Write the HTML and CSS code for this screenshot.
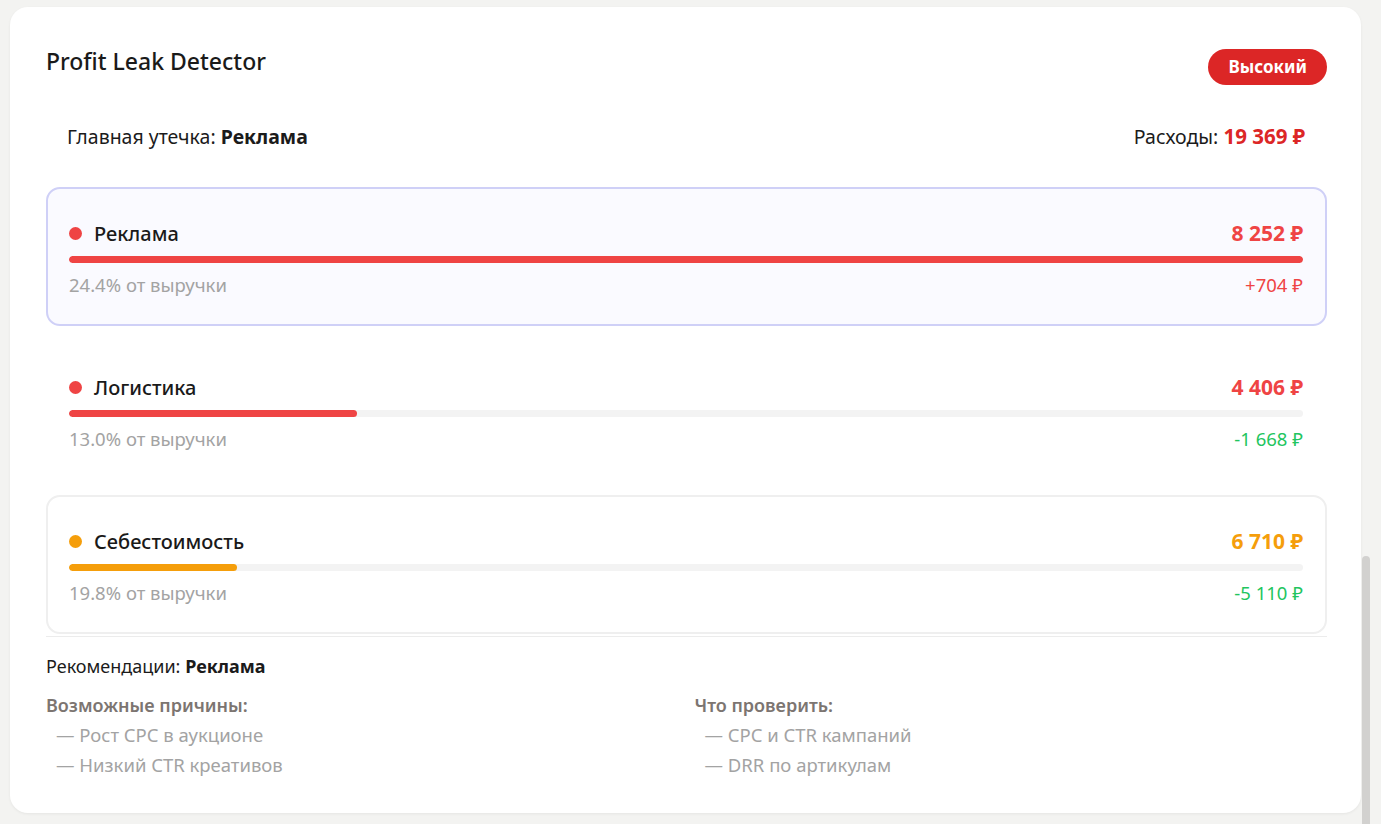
FILE: index.html
```html
<!DOCTYPE html>
<html lang="ru">
<head>
<meta charset="utf-8">
<title>Profit Leak Detector</title>
<link rel="stylesheet" href="styles.css">
</head>
<body>
<div class="page">
  <section class="panel">
    <header class="panel-head">
      <h1 class="panel-title">Profit Leak Detector</h1>
      <span class="badge">Высокий</span>
    </header>

    <div class="summary">
      <div>Главная утечка: <b>Реклама</b></div>
      <div>Расходы: <b class="total">19 369 ₽</b></div>
    </div>

    <div class="leaks">
      <div class="leak leak-active">
        <div class="leak-row">
          <span class="leak-name"><i class="dot dot-red"></i>Реклама</span>
          <span class="leak-value red">8 252 ₽</span>
        </div>
        <div class="bar"><div class="bar-fill fill-red" style="width:100%"></div></div>
        <div class="leak-row sub">
          <span>24.4% от выручки</span>
          <span class="delta red">+704 ₽</span>
        </div>
      </div>

      <div class="leak">
        <div class="leak-row">
          <span class="leak-name"><i class="dot dot-red"></i>Логистика</span>
          <span class="leak-value red">4 406 ₽</span>
        </div>
        <div class="bar"><div class="bar-fill fill-red" style="width:23.3%"></div></div>
        <div class="leak-row sub">
          <span>13.0% от выручки</span>
          <span class="delta green">-1 668 ₽</span>
        </div>
      </div>

      <div class="leak leak-outlined">
        <div class="leak-row">
          <span class="leak-name"><i class="dot dot-orange"></i>Себестоимость</span>
          <span class="leak-value orange">6 710 ₽</span>
        </div>
        <div class="bar"><div class="bar-fill fill-orange" style="width:13.6%"></div></div>
        <div class="leak-row sub">
          <span>19.8% от выручки</span>
          <span class="delta green">-5 110 ₽</span>
        </div>
      </div>
    </div>

    <div class="recs">
      <div class="recs-title">Рекомендации: <b>Реклама</b></div>
      <div class="recs-cols">
        <div class="recs-col">
          <div class="recs-head">Возможные причины:</div>
          <ul class="recs-list">
            <li>— Рост CPC в аукционе</li>
            <li>— Низкий CTR креативов</li>
          </ul>
        </div>
        <div class="recs-col">
          <div class="recs-head">Что проверить:</div>
          <ul class="recs-list">
            <li>— CPC и CTR кампаний</li>
            <li>— DRR по артикулам</li>
          </ul>
        </div>
      </div>
    </div>
  </section>
  <div class="scroll-thumb"></div>
</div>
</body>
</html>
```

FILE: styles.css
```css
* { box-sizing: border-box; }

html, body {
  margin: 0;
  height: 100%;
}

body {
  background: #f3f3f1;
  font-family: "Noto Sans", "Open Sans", sans-serif;
  color: #1b1b1b;
  overflow: hidden;
}

.page {
  position: relative;
  padding: 7px 20px 0 10px;
  height: 824px;
}

.panel {
  background: #ffffff;
  border-radius: 18px;
  box-shadow: 0 1px 3px rgba(0, 0, 0, 0.06);
  padding: 36px 34px 32px 36px;
  height: 806px;
}

.panel-head {
  display: flex;
  justify-content: space-between;
  align-items: flex-start;
}

.panel-title {
  margin: 0;
  font-size: 23px;
  font-weight: 500;
  line-height: 36px;
  color: #1a1a1a;
}

.badge {
  margin-top: 6px;
  height: 36px;
  padding: 0 20px 0 21px;
  border-radius: 18px;
  background: #dc2626;
  color: #fff;
  font-weight: 700;
  font-size: 17px;
  line-height: 36px;
}

.summary {
  display: flex;
  justify-content: space-between;
  align-items: center;
  height: 28px;
  margin: 38px 0 36px;
  padding: 0 22px 0 21px;
  font-size: 19.5px;
  line-height: 28px;
}

.summary b { font-weight: 700; }
.summary .total { color: #dc2626; font-size: 20.5px; line-height: 1; }

.leaks {
  display: flex;
  flex-direction: column;
  gap: 15px;
}

.leak {
  height: 139px;
  border: 2px solid transparent;
  border-radius: 14px;
  padding: 30px 22px 0 21px;
}

.leak-active {
  border-color: #cfd0f7;
  background: #fafaff;
}

.leak-outlined {
  border-color: #efefef;
}

.leak-row {
  display: flex;
  justify-content: space-between;
  align-items: center;
  height: 28px;
}

.leak-name {
  display: flex;
  align-items: center;
  gap: 12px;
  font-size: 20px;
  font-weight: 500;
  color: #1a1a1a;
}

.dot {
  display: block;
  width: 13px;
  height: 13px;
  border-radius: 50%;
}

.dot-red { background: #ef4444; }
.dot-orange { background: #f59e0b; }

.leak-value {
  font-size: 21px;
  font-weight: 700;
}

.red { color: #ef4444; }
.orange { color: #f59e0b; }
.green { color: #22c55e; }

.bar {
  margin-top: 9px;
  height: 7px;
  border-radius: 4px;
  background: #f3f3f3;
  overflow: hidden;
}

.bar-fill {
  height: 100%;
  border-radius: 4px;
}

.fill-red { background: #ef4444; }
.fill-orange { background: #f59e0b; }

.sub {
  margin-top: 7px;
  font-size: 18.5px;
  color: #a3a3a3;
}

.delta { font-size: 18.5px; }

.recs {
  margin-top: 2px;
  border-top: 1px solid #ececec;
  padding-top: 17px;
}

.recs-title {
  font-size: 18px;
  line-height: 24px;
}

.recs-title b { font-weight: 700; }

.recs-cols {
  display: grid;
  grid-template-columns: 1fr 1fr;
  gap: 16px;
  margin-top: 15px;
}

.recs-head {
  font-size: 18px;
  font-weight: 600;
  line-height: 24px;
  color: #7c7571;
}

.recs-list {
  list-style: none;
  margin: 3px 0 0;
  padding: 0 0 0 10px;
}

.recs-list li {
  font-size: 18.5px;
  line-height: 30px;
  color: #a3a3a3;
}

.scroll-thumb {
  position: absolute;
  right: 11px;
  top: 556px;
  width: 8px;
  height: 280px;
  border-radius: 4px;
  background: #d2d1cf;
}
```
